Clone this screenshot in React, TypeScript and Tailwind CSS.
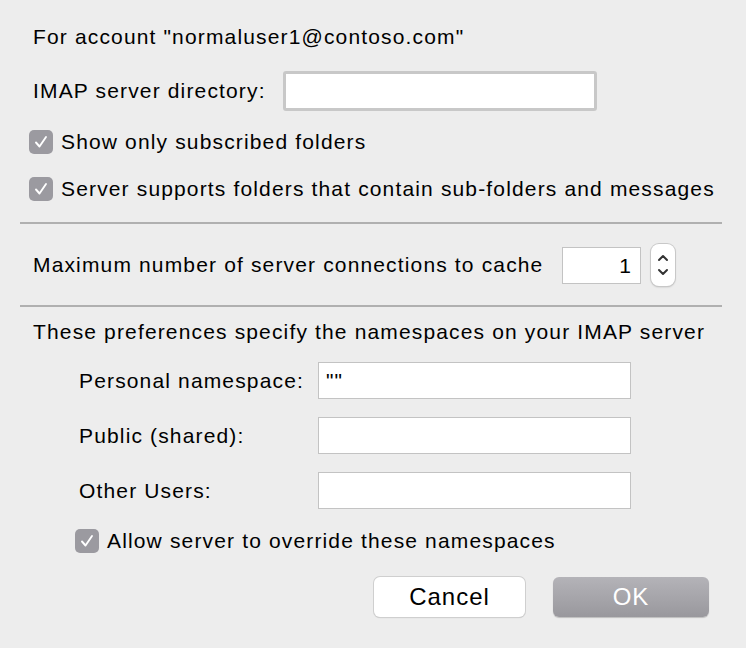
import React from 'react';

function Check({ label }: { label: string }) {
  return (
    <div className="flex h-6 items-center gap-[8px]">
      <span className="flex h-6 w-6 shrink-0 items-center justify-center rounded-[5px] bg-[#9b9aa0]">
        <svg width="18" height="18" viewBox="0 0 18 18">
          <path d="M4 9.5 L7.5 13.5 L14 4" fill="none" stroke="white" strokeWidth="1.9" strokeLinecap="round" strokeLinejoin="round" />
        </svg>
      </span>
      <span className="whitespace-nowrap">{label}</span>
    </div>
  );
}

function Field({ value = '' }: { value?: string }) {
  return (
    <div className="h-[37px] w-[313px] border border-[#c3c3c3] bg-white px-[7px] leading-[35px]">
      {value}
    </div>
  );
}

export default function App() {
  return (
    <div
      className="h-[648px] w-[746px] overflow-hidden bg-[#ededed] text-[21px] tracking-[1.15px] text-black"
      style={{ fontFamily: '"Liberation Sans", Arial, sans-serif' }}
    >
      <div className="mt-[23px] flex h-[28px] items-center pl-[33px]">For account "normaluser1@contoso.com"</div>

      <div className="mt-[20px] flex h-[40px] items-center pl-[33px]">
        <span className="w-[250px] whitespace-nowrap">IMAP server directory:</span>
        <div className="h-[40px] w-[314px] rounded-[3px] border-[3px] border-[#c8c8c8] bg-white" />
      </div>

      <div className="mt-[19px] flex flex-col gap-[23px] pl-[29px]">
        <Check label="Show only subscribed folders" />
        <Check label="Server supports folders that contain sub-folders and messages" />
      </div>

      <div className="ml-[20px] mr-[24px] mt-[21px] h-[2px] bg-[#b0b0b0]" />

      <div className="mt-[20px] flex h-[42px] items-center pl-[33px]">
        <span className="w-[529px] whitespace-nowrap">Maximum number of server connections to cache</span>
        <div className="h-[37px] w-[79px] border border-[#c3c3c3] bg-white pr-[8px] text-right leading-[35px]">1</div>
        <div className="ml-[10px] flex h-[42px] w-[24px] flex-col items-center justify-center gap-[6px] rounded-[8px] bg-white shadow-[0_0_0_1px_#c8c8c8,0_1px_2px_rgba(0,0,0,0.25)]">
          <svg width="12" height="8" viewBox="0 0 12 8">
            <path d="M2 6 L6 2 L10 6" fill="none" stroke="#333" strokeWidth="2" strokeLinecap="round" strokeLinejoin="round" />
          </svg>
          <svg width="12" height="8" viewBox="0 0 12 8">
            <path d="M2 2 L6 6 L10 2" fill="none" stroke="#333" strokeWidth="2" strokeLinecap="round" strokeLinejoin="round" />
          </svg>
        </div>
      </div>

      <div className="ml-[20px] mr-[24px] mt-[19px] h-[2px] bg-[#b0b0b0]" />

      <div className="mt-[11px] flex h-[28px] items-center whitespace-nowrap pl-[33px]">
        These preferences specify the namespaces on your IMAP server
      </div>

      <div className="mt-[16px] flex flex-col gap-[18px] pl-[79px]">
        <div className="flex items-center">
          <span className="w-[239px]">Personal namespace:</span>
          <Field value={'""'} />
        </div>
        <div className="flex items-center">
          <span className="w-[239px]">Public (shared):</span>
          <Field />
        </div>
        <div className="flex items-center">
          <span className="w-[239px]">Other Users:</span>
          <Field />
        </div>
      </div>

      <div className="mt-[20px] pl-[75px]">
        <Check label="Allow server to override these namespaces" />
      </div>

      <div className="mt-[24px] flex gap-[28px] pl-[374px]">
        <button className="h-[40px] w-[151px] rounded-[6px] bg-white text-[24px] tracking-[1px] shadow-[0_0_0_1px_#cfcfcf,0_1px_1px_rgba(0,0,0,0.2)]">
          Cancel
        </button>
        <button className="h-[40px] w-[156px] rounded-[6px] bg-gradient-to-b from-[#b4b3b8] to-[#99989d] text-[24px] tracking-[1px] text-white shadow-[0_1px_1px_rgba(0,0,0,0.2)]">
          OK
        </button>
      </div>
    </div>
  );
}
